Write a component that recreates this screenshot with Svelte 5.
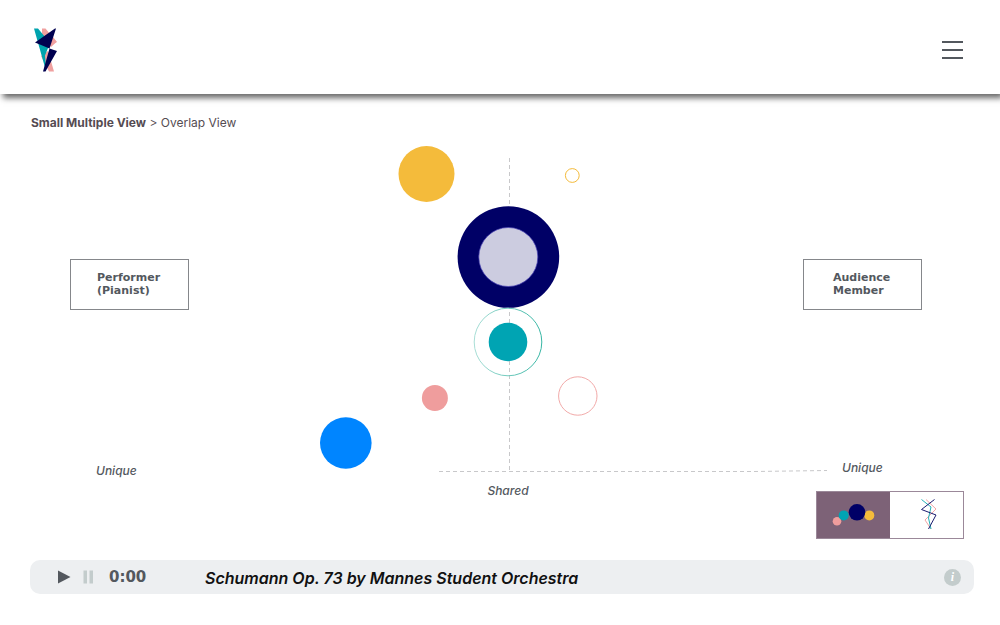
<script>
  let view = $state('overlap');
  let playing = $state(false);
</script>

<header class="topbar">
  <a class="logo" href="#home" aria-label="Home">
    <svg width="24" height="44" viewBox="0 0 24 44" aria-hidden="true">
      <path d="M8 .5h3.500L22.500 14 17 19 8 8ZM7 28l7-5 6 20.500h-5Z" fill="#f0a09f" />
      <path d="M16 17 23 14 19 9Z" fill="#f0a09f" />
      <path d="M0 .5h4L16 15l-5 12.500 1 12h-1L0 .500Z" fill="#00a3ae" />
      <path d="M21 .5 1 14.500 15.500 20.500 22 .5ZM15.500 20.500 23 23 11.500 43.500H9Z" fill="#000050" />
    </svg>
  </a>
  <button class="menu" aria-label="Menu">
    <svg width="22" height="20" viewBox="0 0 22 20" aria-hidden="true">
      <path d="M0 2h21M0 10h21M0 18h21" stroke="#53585e" stroke-width="2" />
    </svg>
  </button>
</header>

<main>
  <nav class="crumbs" aria-label="Breadcrumb">
    <a href="#small-multiple">Small Multiple View</a> <span>&gt; Overlap View</span>
  </nav>

  <section class="stage">
    <div class="side">
      <h2>Performer<br />(Pianist)</h2>
      <p class="axis left">Unique</p>
    </div>

    <svg class="plot" viewBox="189 145 614 339" aria-hidden="true">
      <defs>
        <linearGradient id="ring">
          <stop offset="0" stop-color="#a9ded6" />
          <stop offset="1" stop-color="#35b5a3" />
        </linearGradient>
      </defs>
      <g stroke="#c8c8ca" stroke-dasharray="4 3" fill="none">
        <path d="M509.500 158V471" />
        <path d="M439 471.500H755L827 470.500" />
      </g>
      <circle cx="426.500" cy="174" r="28" fill="#f4bb3b" />
      <circle cx="572.300" cy="175.500" r="6.900" fill="#fff" stroke="#f4bb3b" />
      <circle cx="508.400" cy="257" r="50.800" fill="#000066" />
      <circle cx="508.300" cy="257" r="29.500" fill="#cccce0" stroke="#4a43b5" stroke-width=".7" />
      <circle cx="508" cy="342" r="33.800" fill="none" stroke="url(#ring)" />
      <circle cx="508" cy="342" r="19.300" fill="#00a4b3" />
      <circle cx="434.900" cy="398" r="13" fill="#ef9d9d" />
      <circle cx="577.800" cy="396" r="19.200" fill="#fff" stroke="#f2aaa9" />
      <circle cx="345.800" cy="443" r="25.800" fill="#0085ff" />
    </svg>

    <div class="side">
      <h2>Audience<br />Member</h2>
      <p class="axis right">Unique</p>
    </div>

    <p class="axis shared">Shared</p>

    <div class="toggle" role="group" aria-label="View">
      <button
        aria-label="Circle view"
        aria-pressed={view === 'overlap'}
        onclick={() => (view = 'overlap')}
      >
        <svg width="44" height="24" viewBox="832 503 44 24" aria-hidden="true">
          <circle cx="837" cy="521.300" r="4.300" fill="#ef9d9d" />
          <circle cx="843.700" cy="515.400" r="5" fill="#00a4b3" />
          <circle cx="869.300" cy="515.400" r="5" fill="#f4bb3b" />
          <circle cx="857" cy="512.300" r="8.300" fill="#000066" />
        </svg>
      </button>
      <button
        aria-label="Line view"
        aria-pressed={view === 'lines'}
        onclick={() => (view = 'lines')}
      >
        <svg width="18" height="32" viewBox="918 499 18 32" fill="none" overflow="visible" aria-hidden="true">
          <path d="M926 499.500 936 509 925 520 931 529" stroke="#f2a5a5" />
          <path d="M921.500 499.500 931 507 928.500 518 931 529" stroke="#25b2b8" />
          <path d="M934.500 499.500 921.500 509.500 936 515 928.500 529" stroke="#1c1c70" />
        </svg>
      </button>
    </div>
  </section>

  <section class="player" aria-label="Player">
    <button aria-label="Play" onclick={() => (playing = true)}>
      <svg width="13" height="14" viewBox="0 0 13 14" aria-hidden="true">
        <path d="M0 .5 12.500 7 0 13.500Z" fill="#53585e" />
      </svg>
    </button>
    <button class="pause" aria-label="Pause" onclick={() => (playing = false)}>
      <svg width="10" height="14" viewBox="0 0 10 14" aria-hidden="true">
        <path d="M.5 .5H4v13H.5ZM6.500 .5H10v13H6.500Z" fill="#c3cccc" />
      </svg>
    </button>
    <time>0:00</time>
    <p class="title">Schumann Op. 73 by Mannes Student Orchestra</p>
    <button class="info" aria-label="Information">i</button>
  </section>
</main>

<style>
  :global(body) {
    margin: 0;
    background: #fff;
    color: #53585e;
    font-family: Inter, 'Liberation Sans', sans-serif;
  }

  h2,
  p {
    margin: 0;
  }

  button {
    display: grid;
    place-items: center;
    border: 0;
    padding: 0;
    background: none;
    color: inherit;
    font: inherit;
    cursor: pointer;
  }

  svg {
    display: block;
  }

  .topbar {
    display: flex;
    align-items: center;
    justify-content: space-between;
    box-sizing: border-box;
    height: 94px;
    padding: 6px 36px 0 34px;
    background: #fff;
    box-shadow: 3px 4px 6px rgb(0 0 0 / 60%);
  }

  .crumbs {
    margin: 16px 31px 9px;
    color: #554c52;
    font-size: 12px;
    line-height: 26px;
  }

  .crumbs a {
    color: inherit;
    font-weight: 700;
    text-decoration: none;
  }

  .stage {
    display: grid;
    grid-template-columns: 119px 1fr 161px;
    padding: 0 36px 0 70px;
  }

  .side {
    padding-top: 114px;
  }

  h2 {
    display: flex;
    align-items: center;
    box-sizing: border-box;
    width: 119px;
    height: 51px;
    border: 1px solid #85878b;
    padding: 0 0 2px 26px;
    font-family: 'DejaVu Sans', sans-serif;
    font-size: 11px;
    font-weight: 700;
    line-height: 13px;
  }

  .side:nth-of-type(2) h2 {
    padding-left: 29px;
  }

  .plot {
    width: 100%;
    height: 339px;
    overflow: visible;
  }

  .axis {
    font-size: 12px;
    font-style: italic;
    font-weight: 500;
    line-height: 14px;
  }

  .left {
    margin: 154px 0 0 26px;
  }

  .right {
    margin: 151px 0 0 39px;
  }

  .shared {
    grid-column: 2;
    padding-left: 24px;
    text-align: center;
  }

  .toggle {
    display: flex;
    justify-self: end;
    box-sizing: border-box;
    width: 148px;
    height: 48px;
    margin-top: 7px;
    border: 1px solid #9b8899;
  }

  .toggle button {
    flex: 1;
  }

  .toggle [aria-pressed='true'] {
    background: #7d6277;
  }

  .player {
    display: flex;
    align-items: center;
    height: 34px;
    margin: 21px 26px 0 30px;
    border-radius: 10px;
    padding: 0 13px 0 28px;
    background: #edeff1;
  }

  .pause {
    margin-left: 12px;
  }

  time {
    width: 80px;
    margin-left: 16px;
    font-family: 'DejaVu Sans', sans-serif;
    font-size: 15px;
    font-weight: 700;
  }

  .title {
    margin-left: 16px;
    padding-top: 2px;
    color: #111;
    font-size: 16px;
    font-style: italic;
    font-weight: 600;
  }

  .info {
    width: 17px;
    height: 17px;
    margin-left: auto;
    border-radius: 50%;
    background: #c3cccc;
    color: #fff;
    font: italic 700 12px/17px 'Liberation Serif', serif;
  }
</style>
